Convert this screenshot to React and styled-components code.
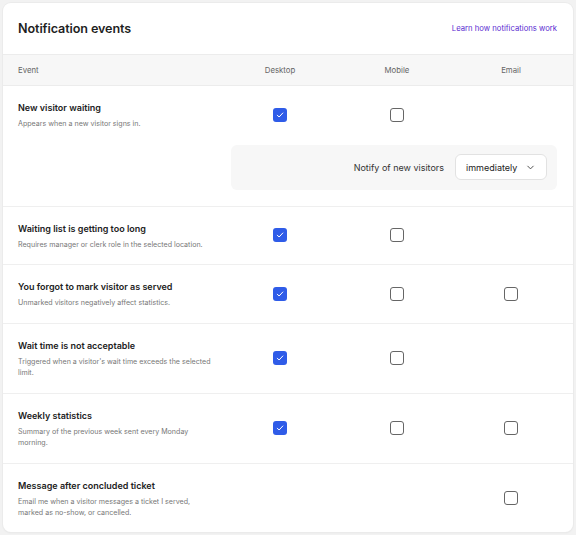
import styled, { createGlobalStyle } from "styled-components"
import { FiChevronDown } from "react-icons/fi"

const GlobalStyle = createGlobalStyle`
  body {
    margin: 0;
    background: #f2f2f2;
    font-family: Inter, "Noto Sans", sans-serif;
    color: #1f1f1f;
  }
`

const Page = styled.div`
  padding: 3px;
`

const Card = styled.section`
  background: #ffffff;
  border-radius: 8px;
  box-shadow: 0 0 0 1px #ebebeb, 0 1px 2px rgba(0, 0, 0, 0.06);
  overflow: hidden;
`

const Header = styled.header`
  height: 51px;
  padding: 0 16px 0 15px;
  display: flex;
  align-items: center;
  justify-content: space-between;
`

const Title = styled.h1`
  margin: 0;
  font-size: 12.6px;
  font-weight: 600;
  letter-spacing: -0.1px;
`

const HelpLink = styled.a`
  font-size: 7.7px;
  color: #5a2bd1;
  text-decoration: none;
`

const Grid = styled.div`
  display: grid;
  grid-template-columns: 1fr 98px 136px 92px;
  padding: 0 16px 0 15px;
  align-items: center;
`

const ColumnBar = styled(Grid)`
  height: 32px;
  background: #f7f7f7;
  border-top: 1px solid #ececec;
  border-bottom: 1px solid #ececec;
  box-sizing: border-box;
`

const ColumnLabel = styled.div`
  font-size: 7.8px;
  color: #666;
  text-align: ${(props) => (props.$left ? "left" : "center")};
`

const Row = styled.div`
  padding: 14px 0 14px;
  border-top: 1px solid #efefef;

  &:first-of-type {
    border-top: none;
  }

  &:last-of-type {
    padding-bottom: 13px;
  }
`

const EventInfo = styled.div`
  max-width: 196px;
`

const EventName = styled.div`
  font-size: 9px;
  font-weight: 600;
  line-height: 16px;
  color: #222;
`

const EventText = styled.div`
  margin-top: 2px;
  font-size: 7.1px;
  line-height: 11.5px;
  color: #777;
`

const Cell = styled.div`
  display: flex;
  justify-content: center;
`

const Box = styled.span`
  width: 14px;
  height: 14px;
  box-sizing: border-box;
  border-radius: 3px;
  display: inline-flex;
  align-items: center;
  justify-content: center;
  background: ${(props) => (props.$checked ? "#2f5ce8" : "#fff")};
  border: ${(props) => (props.$checked ? "none" : "1.5px solid #666")};
`

const Panel = styled.div`
  grid-column: 2 / 5;
  margin-top: 15px;
  margin-bottom: 2px;
  height: 45px;
  background: #f7f7f7;
  border-radius: 6px;
  display: flex;
  align-items: center;
  justify-content: flex-end;
  gap: 11px;
  padding-right: 10px;
`

const PanelLabel = styled.span`
  font-size: 9px;
  color: #333;
`

const Select = styled.div`
  width: 92px;
  height: 26px;
  box-sizing: border-box;
  background: #fff;
  border: 1px solid #e2e2e2;
  border-radius: 6px;
  display: flex;
  align-items: center;
  justify-content: space-between;
  padding: 0 10px 0 10px;
  font-size: 9px;
  color: #222;
`

function Check({ checked }) {
  return (
    <Box $checked={checked}>
      {checked && (
        <svg width="8" height="8" viewBox="0 0 8 8" fill="none">
          <path
            d="M1.3 4.2 3.1 6 6.8 2"
            stroke="#fff"
            strokeWidth="1"
            strokeLinecap="round"
            strokeLinejoin="round"
          />
        </svg>
      )}
    </Box>
  )
}

const events = [
  {
    name: "New visitor waiting",
    text: "Appears when a new visitor signs in.",
    desktop: true,
    mobile: false,
    email: null,
    extra: true,
  },
  {
    name: "Waiting list is getting too long",
    text: "Requires manager or clerk role in the selected location.",
    desktop: true,
    mobile: false,
    email: null,
  },
  {
    name: "You forgot to mark visitor as served",
    text: "Unmarked visitors negatively affect statistics.",
    desktop: true,
    mobile: false,
    email: false,
  },
  {
    name: "Wait time is not acceptable",
    text: "Triggered when a visitor's wait time exceeds the selected limit.",
    desktop: true,
    mobile: false,
    email: null,
  },
  {
    name: "Weekly statistics",
    text: "Summary of the previous week sent every Monday morning.",
    desktop: true,
    mobile: false,
    email: false,
  },
  {
    name: "Message after concluded ticket",
    text: "Email me when a visitor messages a ticket I served, marked as no-show, or cancelled.",
    desktop: null,
    mobile: null,
    email: false,
  },
]

function Toggle({ value }) {
  return <Cell>{value !== null && <Check checked={value} />}</Cell>
}

export default function App() {
  return (
    <Page>
      <GlobalStyle />
      <Card>
        <Header>
          <Title>Notification events</Title>
          <HelpLink href="#">Learn how notifications work</HelpLink>
        </Header>
        <ColumnBar>
          <ColumnLabel $left>Event</ColumnLabel>
          <ColumnLabel>Desktop</ColumnLabel>
          <ColumnLabel>Mobile</ColumnLabel>
          <ColumnLabel>Email</ColumnLabel>
        </ColumnBar>
        <div>
          {events.map((ev) => (
            <Row key={ev.name}>
              <Grid>
                <EventInfo>
                  <EventName>{ev.name}</EventName>
                  <EventText>{ev.text}</EventText>
                </EventInfo>
                <Toggle value={ev.desktop} />
                <Toggle value={ev.mobile} />
                <Toggle value={ev.email} />
                {ev.extra && (
                  <Panel>
                    <PanelLabel>Notify of new visitors</PanelLabel>
                    <Select>
                      immediately
                      <FiChevronDown size={11} color="#444" />
                    </Select>
                  </Panel>
                )}
              </Grid>
            </Row>
          ))}
        </div>
      </Card>
    </Page>
  )
}
